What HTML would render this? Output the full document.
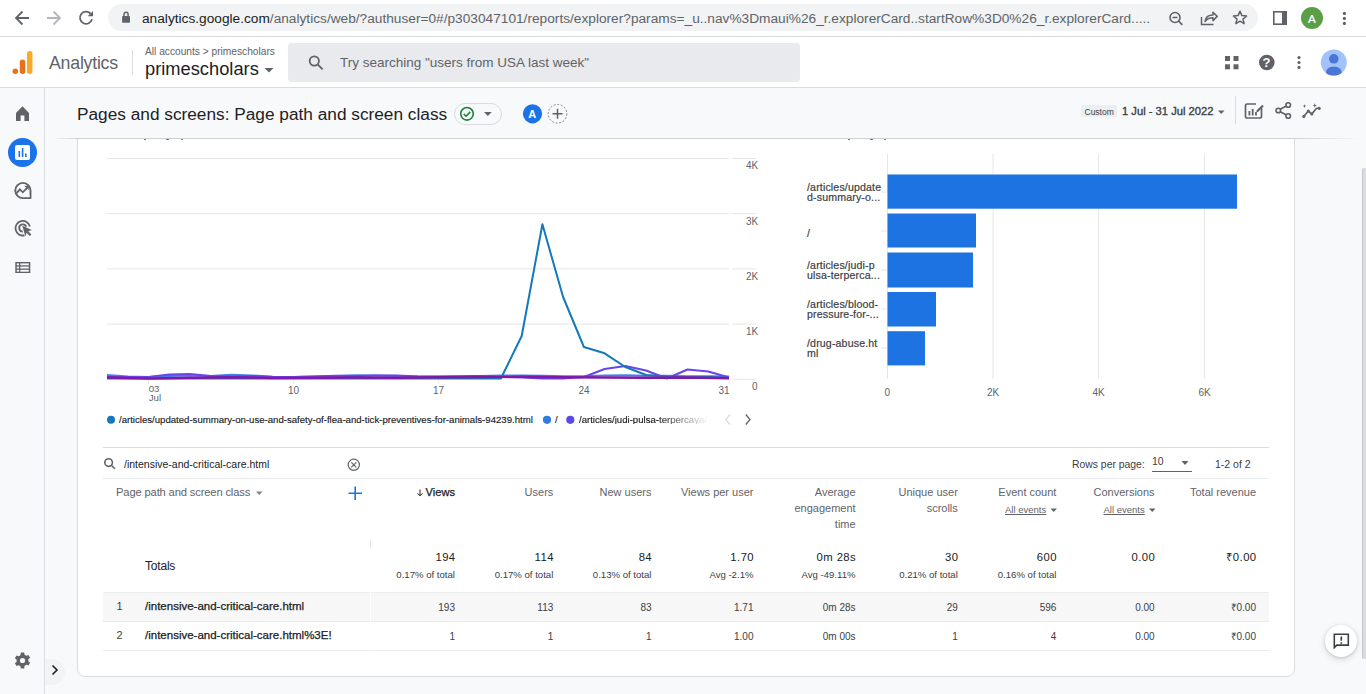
<!DOCTYPE html>
<html><head><meta charset="utf-8">
<style>
*{box-sizing:border-box;margin:0;padding:0}
html,body{width:1366px;height:694px;overflow:hidden;background:#f8f9fa;font-family:"Liberation Sans",sans-serif;color:#202124}
.a{position:absolute}
.t{position:absolute;white-space:nowrap;line-height:1}
.r{text-align:right}
svg{position:absolute;overflow:visible}
</style></head><body>

<!-- card -->
<div class="a" style="left:77px;top:100px;width:1218px;height:577px;background:#fff;border:1px solid #dadce0;border-radius:8px"></div>
<div class="a" style="left:45px;top:88px;width:1321px;height:50px;background:#f8f9fa"></div>

<!-- line chart -->
<svg style="left:0;top:140px" width="800" height="300" viewBox="0 140 800 300">
 <g stroke="#e6e6e6" stroke-width="1">
  <path d="M107 158.5H729M107 213.7H729M107 268.9H729M107 324.1H729"/>
  <path d="M732 158.5H756M732 213.7H756M732 268.9H756M732 324.1H756M732 379.3H756"/>
 </g>
 <g stroke="#e8eaed" stroke-width="1"><path d="M148.5 380v4M293.6 380v4M438.8 380v4M583.9 380v4M729 380v4"/></g>
 <g fill="none" stroke-width="2" stroke-linejoin="round">
  <path d="M107.0 375.0 L127.7 376.5 L148.5 377.0 L169.2 376.0 L189.9 375.5 L210.7 376.0 L231.4 374.8 L252.1 375.5 L272.9 376.8 L293.6 377.0 L314.3 376.5 L335.1 376.0 L355.8 375.3 L376.5 375.6 L397.3 376.0 L418.0 376.5 L438.7 376.2 L459.5 376.2 L480.2 376.0 L500.9 375.5 L521.7 375.6 L542.4 375.8 L563.1 376.2 L583.9 376.3 L604.6 375.5 L625.3 375.2 L646.1 375.8 L666.8 375.8 L687.5 376.2 L708.3 376.3 L729.0 376.5" stroke="#3f80f0"/>
  <path d="M107.0 377.0 L127.7 377.0 L148.5 377.0 L169.2 374.5 L189.9 374.0 L210.7 376.0 L231.4 376.5 L252.1 376.0 L272.9 377.0 L293.6 377.0 L314.3 376.5 L335.1 375.8 L355.8 376.0 L376.5 375.5 L397.3 375.5 L418.0 376.5 L438.7 377.0 L459.5 376.5 L480.2 376.0 L500.9 377.0 L521.7 377.5 L542.4 378.5 L563.1 378.5 L583.9 377.0 L604.6 369.0 L625.3 366.0 L646.1 370.5 L666.8 378.5 L687.5 369.5 L708.3 371.5 L729.0 377.5" stroke="#6a45ea"/>
  <path d="M107.0 378.5 L480.2 378.5 L500.9 378.5 L521.7 336.0 L542.4 224.3 L563.1 297.0 L583.9 347.0 L604.6 353.3 L625.3 367.0 L646.1 375.0 L666.8 376.5 L687.5 377.5 L708.3 377.0 L729.0 378.0" stroke="#1479b8"/>
  <path d="M107.0 377.5 L148.5 378.5 L189.9 377.8 L231.4 377.2 L272.9 378.0 L314.3 377.8 L355.8 377.5 L397.3 377.8 L438.7 377.3 L480.2 377.0 L521.7 376.8 L563.1 377.2 L604.6 377.5 L646.1 377.8 L687.5 377.5 L729.0 378.3" stroke="#8119a6" stroke-width="2.4"/>
 </g>
 <g fill="#e8eaed"><rect x="720" y="340" width="0" height="0"/></g>
 <circle cx="111" cy="419.8" r="4" fill="#1479b8"/>
 <circle cx="547" cy="419.8" r="4.1" fill="#2f7de1"/>
 <circle cx="570.3" cy="419.8" r="4.1" fill="#5a4ae3"/>
 <path d="M730 414.5l-4.2 5 4.2 5" fill="none" stroke="#dadce0" stroke-width="1.3"/>
 <path d="M745.8 414.5l4.2 5-4.2 5" fill="none" stroke="#5f6368" stroke-width="1.3"/>
</svg>
<div class="t" style="left:746px;top:161.3px;font-size:10px;color:#5f6368">4K</div>
<div class="t" style="left:746px;top:216.5px;font-size:10px;color:#5f6368">3K</div>
<div class="t" style="left:746px;top:271.7px;font-size:10px;color:#5f6368">2K</div>
<div class="t" style="left:746px;top:326.9px;font-size:10px;color:#5f6368">1K</div>
<div class="t" style="left:752px;top:382.3px;font-size:10px;color:#5f6368">0</div>
<div class="t" style="left:148.7px;top:385.3px;font-size:9.7px;color:#5f6368;line-height:8.9px">03<br>Jul</div>
<div class="t" style="left:288px;top:385.8px;font-size:10px;color:#5f6368">10</div>
<div class="t" style="left:433px;top:385.8px;font-size:10px;color:#5f6368">17</div>
<div class="t" style="left:578.5px;top:385.8px;font-size:10px;color:#5f6368">24</div>
<div class="t" style="left:718.5px;top:385.8px;font-size:10px;color:#5f6368">31</div>
<div class="t" style="left:119px;top:414.5px;font-size:9.6px;color:#202124;-webkit-text-stroke:0.15px #202124">/articles/updated-summary-on-use-and-safety-of-flea-and-tick-preventives-for-animals-94239.html</div>
<div class="t" style="left:555px;top:414.5px;font-size:9.6px;color:#202124;-webkit-text-stroke:0.15px #202124">/</div>
<div class="t" style="left:579px;top:414.5px;font-size:9.6px;width:130px;overflow:hidden;color:#202124;-webkit-text-stroke:0.15px #202124;-webkit-mask-image:linear-gradient(90deg,#000 60%,transparent 100%)">/articles/judi-pulsa-terpercaya/</div>

<!-- bar chart -->
<svg style="left:780px;top:140px" width="500" height="270" viewBox="780 140 500 270">
 <g stroke="#e6e6e6" stroke-width="1">
  <path d="M887.5 154V379M993 154V379M1098.6 154V379M1204.4 154V379"/>
  <path d="M881 192H887M881 231H887M881 270H887M881 309H887M881 348H887"/>
 </g>
 <g fill="#1e73e2">
  <rect x="887.5" y="174.5" width="349.5" height="34.2"/>
  <rect x="887.5" y="213.5" width="88.5" height="34"/>
  <rect x="887.5" y="252.5" width="85.5" height="35"/>
  <rect x="887.5" y="292" width="48.5" height="34.5"/>
  <rect x="887.5" y="331.2" width="37.5" height="34.2"/>
 </g>
</svg>
<div class="t" style="left:807px;top:182.1px;font-size:10.6px;line-height:10.2px;letter-spacing:0.15px;-webkit-text-stroke:0.2px #3c4043;color:#3c4043">/articles/update<br>d-summary-o...</div>
<div class="t" style="left:807px;top:227.8px;font-size:10.6px;line-height:10.2px;letter-spacing:0.15px;-webkit-text-stroke:0.2px #3c4043;color:#3c4043">/</div>
<div class="t" style="left:807px;top:260.1px;font-size:10.6px;line-height:10.2px;letter-spacing:0.15px;-webkit-text-stroke:0.2px #3c4043;color:#3c4043">/articles/judi-p<br>ulsa-terperca...</div>
<div class="t" style="left:807px;top:299.1px;font-size:10.6px;line-height:10.2px;letter-spacing:0.15px;-webkit-text-stroke:0.2px #3c4043;color:#3c4043">/articles/blood-<br>pressure-for-...</div>
<div class="t" style="left:807px;top:338.1px;font-size:10.6px;line-height:10.2px;letter-spacing:0.15px;-webkit-text-stroke:0.2px #3c4043;color:#3c4043">/drug-abuse.ht<br>ml</div>
<div class="t" style="left:884.5px;top:387.8px;font-size:10px;color:#5f6368">0</div>
<div class="t" style="left:987px;top:387.8px;font-size:10px;color:#5f6368">2K</div>
<div class="t" style="left:1092.5px;top:387.8px;font-size:10px;color:#5f6368">4K</div>
<div class="t" style="left:1198.5px;top:387.8px;font-size:10px;color:#5f6368">6K</div>

<!-- table -->
<div class="a" style="left:103px;top:447px;width:1166px;height:1px;background:#dadce0"></div>
<div class="a" style="left:103px;top:478px;width:1166px;height:1px;background:#e8eaed"></div>
<div class="a" style="left:103px;top:592px;width:1166px;height:30px;background:#f7f7f7;border-top:1px solid #ededed;border-bottom:1px solid #ececec"></div>
<div class="a" style="left:103px;top:650px;width:1166px;height:1px;background:#ececec"></div>
<div class="a" style="left:370px;top:592px;width:1px;height:60px;background:#fff"></div>
<div class="a" style="left:370px;top:540px;width:1px;height:8px;background:#e8eaed"></div>
<svg style="left:0;top:440px" width="1366" height="80" viewBox="0 440 1366 80">
 <g fill="none" stroke="#5f6368" stroke-width="1.6"><circle cx="108.6" cy="462.6" r="3.8"/><path d="M111.3 465.3l3.5 3.5"/></g>
 <g fill="none" stroke="#5f6368" stroke-width="1.2"><circle cx="353.8" cy="464.8" r="5.6"/><path d="M351.3 462.3l5 5M356.3 462.3l-5 5"/></g>
 <path d="M1181.5 461h7l-3.5 4z" fill="#5f6368"/>
 <path d="M256 491.5h6.5l-3.25 3.5z" fill="#80868b"/>
 <path d="M355.2 486.5v13.5M348.5 493.2h13.5" stroke="#1a73e8" stroke-width="1.6"/>
 <path d="M420 489.5v6M417.5 493.3l2.5 2.6 2.5-2.6" fill="none" stroke="#202124" stroke-width="1"/>
 <path d="M1050.5 508.5h6.5l-3.25 3.5zM1149 508.5h6.5l-3.25 3.5z" fill="#5f6368"/>
</svg>
<div class="t" style="left:124px;top:458.5px;font-size:10.5px;color:#202124">/intensive-and-critical-care.html</div>
<div class="t" style="left:1072px;top:459.5px;font-size:10.4px;color:#3c4043">Rows per page:</div>
<div class="t" style="left:1152px;top:457px;font-size:10.4px;color:#3c4043">10</div>
<div class="a" style="left:1152px;top:471px;width:40px;height:1px;background:#5f6368"></div>
<div class="t" style="left:1215px;top:458.6px;font-size:10.5px;color:#3c4043">1-2 of 2</div>
<div class="t" style="left:116px;top:487.2px;font-size:11.2px;letter-spacing:-0.15px;color:#5f6368">Page path and screen class</div>
<div class="t r" style="right:911px;top:487px;font-size:11.1px;color:#202124;-webkit-text-stroke:0.25px #202124">Views</div>
<div class="t r" style="right:812.7px;top:487.2px;font-size:11px;color:#5f6368;">Users</div>
<div class="t r" style="right:714.5px;top:487.2px;font-size:11px;color:#5f6368;">New users</div>
<div class="t r" style="right:612.5px;top:487.2px;font-size:11px;color:#5f6368;">Views per user</div>
<div class="t r" style="right:510.4px;top:488px;font-size:11px;color:#5f6368;line-height:16.3px;top:483.6px">Average<br>engagement<br>time</div>
<div class="t r" style="right:408.20000000000005px;top:488px;font-size:11px;color:#5f6368;line-height:16.3px;top:483.6px">Unique user<br>scrolls</div>
<div class="t r" style="right:309.5999999999999px;top:487.2px;font-size:11px;color:#5f6368;">Event count</div>
<div class="t r" style="right:211.4000000000001px;top:487.2px;font-size:11px;color:#5f6368;">Conversions</div>
<div class="t r" style="right:110px;top:487.2px;font-size:11px;color:#5f6368;">Total revenue</div>
<div class="t" style="left:1005px;top:504.8px;font-size:9.5px;color:#5f6368;text-decoration:underline">All events</div>
<div class="t" style="left:1103.5px;top:504.8px;font-size:9.5px;color:#5f6368;text-decoration:underline">All events</div>
<div class="t" style="left:145px;top:560px;font-size:12px;letter-spacing:-0.2px;color:#202124">Totals</div>
<div class="t r" style="right:910.4px;top:552.3px;font-size:11.3px;letter-spacing:0.45px;color:#202124;">194</div>
<div class="t r" style="right:911px;top:570px;font-size:9.6px;color:#3c4043;">0.17% of total</div>
<div class="t r" style="right:812.1px;top:552.3px;font-size:11.3px;letter-spacing:0.45px;color:#202124;">114</div>
<div class="t r" style="right:812.7px;top:570px;font-size:9.6px;color:#3c4043;">0.17% of total</div>
<div class="t r" style="right:713.9px;top:552.3px;font-size:11.3px;letter-spacing:0.45px;color:#202124;">84</div>
<div class="t r" style="right:714.5px;top:570px;font-size:9.6px;color:#3c4043;">0.13% of total</div>
<div class="t r" style="right:611.9px;top:552.3px;font-size:11.3px;letter-spacing:0.45px;color:#202124;">1.70</div>
<div class="t r" style="right:612.5px;top:570px;font-size:9.6px;color:#3c4043;">Avg -2.1%</div>
<div class="t r" style="right:509.8px;top:552.3px;font-size:11.3px;letter-spacing:0.45px;color:#202124;">0m 28s</div>
<div class="t r" style="right:510.4px;top:570px;font-size:9.6px;color:#3c4043;">Avg -49.11%</div>
<div class="t r" style="right:407.6px;top:552.3px;font-size:11.3px;letter-spacing:0.45px;color:#202124;">30</div>
<div class="t r" style="right:408.20000000000005px;top:570px;font-size:9.6px;color:#3c4043;">0.21% of total</div>
<div class="t r" style="right:309.0px;top:552.3px;font-size:11.3px;letter-spacing:0.45px;color:#202124;">600</div>
<div class="t r" style="right:309.5999999999999px;top:570px;font-size:9.6px;color:#3c4043;">0.16% of total</div>
<div class="t r" style="right:210.8px;top:552.3px;font-size:11.3px;letter-spacing:0.45px;color:#202124;">0.00</div>
<div class="t r" style="right:109.4px;top:552.3px;font-size:11.3px;letter-spacing:0.45px;color:#202124;">&#8377;0.00</div>
<div class="t" style="left:116.5px;top:601px;font-size:11px;color:#3c4043">1</div>
<div class="t" style="left:145px;top:600.7px;font-size:11.5px;color:#202124;-webkit-text-stroke:0.25px #202124">/intensive-and-critical-care.html</div>
<div class="t" style="left:116.5px;top:630px;font-size:11px;color:#3c4043">2</div>
<div class="t" style="left:145px;top:629.7px;font-size:11.5px;color:#202124;-webkit-text-stroke:0.25px #202124">/intensive-and-critical-care.html%3E!</div>
<div class="t r" style="right:911px;top:602.5px;font-size:10px;color:#3c4043;">193</div>
<div class="t r" style="right:911px;top:631.5px;font-size:10px;color:#3c4043;">1</div>
<div class="t r" style="right:812.7px;top:602.5px;font-size:10px;color:#3c4043;">113</div>
<div class="t r" style="right:812.7px;top:631.5px;font-size:10px;color:#3c4043;">1</div>
<div class="t r" style="right:714.5px;top:602.5px;font-size:10px;color:#3c4043;">83</div>
<div class="t r" style="right:714.5px;top:631.5px;font-size:10px;color:#3c4043;">1</div>
<div class="t r" style="right:612.5px;top:602.5px;font-size:10px;color:#3c4043;">1.71</div>
<div class="t r" style="right:612.5px;top:631.5px;font-size:10px;color:#3c4043;">1.00</div>
<div class="t r" style="right:510.4px;top:602.5px;font-size:10px;color:#3c4043;">0m 28s</div>
<div class="t r" style="right:510.4px;top:631.5px;font-size:10px;color:#3c4043;">0m 00s</div>
<div class="t r" style="right:408.20000000000005px;top:602.5px;font-size:10px;color:#3c4043;">29</div>
<div class="t r" style="right:408.20000000000005px;top:631.5px;font-size:10px;color:#3c4043;">1</div>
<div class="t r" style="right:309.5999999999999px;top:602.5px;font-size:10px;color:#3c4043;">596</div>
<div class="t r" style="right:309.5999999999999px;top:631.5px;font-size:10px;color:#3c4043;">4</div>
<div class="t r" style="right:211.4000000000001px;top:602.5px;font-size:10px;color:#3c4043;">0.00</div>
<div class="t r" style="right:211.4000000000001px;top:631.5px;font-size:10px;color:#3c4043;">0.00</div>
<div class="t r" style="right:110px;top:602.5px;font-size:10px;color:#3c4043;">&#8377;0.00</div>
<div class="t r" style="right:110px;top:631.5px;font-size:10px;color:#3c4043;">&#8377;0.00</div>

<div class="a" style="left:45px;top:658.5px;width:19.5px;height:26.5px;background:#f1f3f4;border-radius:0 13px 13px 0"></div>
<svg style="left:0;top:640px" width="80" height="54" viewBox="0 640 80 54"><path d="M52.5 665.5l4.5 4.5-4.5 4.5" fill="none" stroke="#202124" stroke-width="1.6"/></svg>
<div class="a" style="left:1325px;top:624.7px;width:32px;height:32px;border-radius:50%;background:#fff;box-shadow:0 1px 3px rgba(60,64,67,.2),0 2px 6px 1px rgba(60,64,67,.12)"></div>
<svg style="left:1320px;top:620px" width="40" height="40" viewBox="1320 620 40 40"><path d="M1334.3 634.3h14v10.8H1336.8l-2.5 2.5z" fill="none" stroke="#3c4043" stroke-width="1.6" stroke-linejoin="miter"/><path d="M1341.3 636.5v4.3M1341.3 642.2v1.6" stroke="#3c4043" stroke-width="1.7"/></svg>
<div class="a" style="left:1362px;top:168px;width:5px;height:491px;background:#dadce0;border-radius:2px;border-left:1px solid #c4c7cb"></div>
<div class="a" style="left:144px;top:138px;width:1.5px;height:1.6px;background:#5a5f66;border-radius:0 0 1px 1px"></div>
<div class="a" style="left:165.5px;top:138px;width:3px;height:1.6px;background:#5a5f66;border-radius:0 0 1px 1px"></div>
<div class="a" style="left:181px;top:138px;width:1.5px;height:1.6px;background:#5a5f66;border-radius:0 0 1px 1px"></div>
<div class="a" style="left:848px;top:138px;width:1.5px;height:1.6px;background:#5a5f66;border-radius:0 0 1px 1px"></div>
<div class="a" style="left:869.5px;top:138px;width:3px;height:1.6px;background:#5a5f66;border-radius:0 0 1px 1px"></div>
<div class="a" style="left:884px;top:138px;width:1.5px;height:1.6px;background:#5a5f66;border-radius:0 0 1px 1px"></div>
<!-- Chrome toolbar -->
<div class="a" style="left:0;top:0;width:1366px;height:36px;background:#fff"></div>
<div class="a" style="left:0;top:36px;width:1366px;height:1px;background:#dadce0"></div>
<div class="a" style="left:108px;top:4px;width:1150px;height:27px;background:#f1f3f4;border-radius:14px"></div>
<div class="t" style="left:142px;top:11.8px;font-size:13.7px;color:#5f6368"><span style="color:#202124">analytics.google.com</span>/analytics/web/?authuser=0#/p303047101/reports/explorer?params=_u..nav%3Dmaui%26_r.explorerCard..startRow%3D0%26_r.explorerCard.....</div>


<!-- chrome nav icons -->
<svg style="left:0;top:0" width="1366" height="36" viewBox="0 0 1366 36">
 <g fill="none" stroke="#5f6368" stroke-width="1.8">
  <path d="M29 18H16.5M22.5 11.5L16 18l6.5 6.5"/>
 </g>
 <g fill="none" stroke="#b4b7bb" stroke-width="1.8">
  <path d="M47 18h12.5M53.5 11.5L60 18l-6.5 6.5"/>
 </g>
 <g fill="none" stroke="#5f6368" stroke-width="1.8">
  <path d="M90.6 13.6A6.1 6.1 0 1 0 92 19.3"/>
 </g>
 <path d="M93 10.9v5.3h-5.3z" fill="#5f6368"/>
 <!-- lock -->
 <rect x="122.1" y="16" width="7.9" height="6.8" rx="0.9" fill="#5f6368"/>
 <path d="M124 16.5v-2.2a2.05 2.05 0 0 1 4.1 0v2.2" fill="none" stroke="#5f6368" stroke-width="1.5"/>
 <!-- zoom out -->
 <g fill="none" stroke="#5f6368" stroke-width="1.6">
  <circle cx="1175" cy="17.5" r="5"/><path d="M1178.6 21.1l3.8 3.8M1172.5 17.5h5"/>
 </g>
 <!-- share -->
 <g fill="none" stroke="#5f6368" stroke-width="1.5">
  <path d="M1201.5 17v7.5h12"/>
  <path d="M1205 21.5c0.5-4 3.5-6.5 8-6.5v-2.8l4.2 4.2-4.2 4.2v-2.9c-3.5 0-6 1-8 3.8z" stroke-linejoin="round"/>
 </g>
 <!-- star -->
 <path d="M1240 11.3l1.9 4.3 4.7.4-3.6 3.1 1.1 4.6-4.1-2.5-4.1 2.5 1.1-4.6-3.6-3.1 4.7-.4z" fill="none" stroke="#5f6368" stroke-width="1.5" stroke-linejoin="round"/>
 <!-- side panel -->
 <rect x="1273.8" y="11.8" width="12.4" height="12.4" fill="none" stroke="#5f6368" stroke-width="1.6"/>
 <rect x="1282" y="11.5" width="4.5" height="13" fill="#5f6368"/>
 <!-- avatar -->
 <circle cx="1312" cy="18" r="11" fill="#5a9f45"/>
 <!-- menu dots -->
 <circle cx="1344.4" cy="13.4" r="1.6" fill="#5f6368"/><circle cx="1344.4" cy="18.4" r="1.6" fill="#5f6368"/><circle cx="1344.4" cy="23.4" r="1.6" fill="#5f6368"/>
</svg>
<div class="t" style="left:1308px;top:12.6px;font-size:11.6px;color:#fff;-webkit-text-stroke:0.2px #fff">A</div>

<!-- GA header -->
<div class="a" style="left:0;top:37px;width:1366px;height:50px;background:#fff"></div>
<div class="a" style="left:0;top:87px;width:1366px;height:1px;background:#dadce0"></div>
<div class="t" style="left:49px;top:54.5px;font-size:17.8px;letter-spacing:-0.25px;color:#5f6368">Analytics</div>
<div class="a" style="left:132px;top:50px;width:1px;height:25px;background:#dadce0"></div>
<div class="t" style="left:145px;top:46.5px;font-size:10.2px;color:#5f6368">All accounts &gt; primescholars</div>
<div class="t" style="left:145px;top:60px;font-size:18.3px;color:#202124">primescholars</div>
<div class="a" style="left:288px;top:43px;width:512px;height:39px;background:#e9eaee;border-radius:4px"></div>
<div class="t" style="left:340px;top:56px;font-size:13.5px;color:#5f6368">Try searching "users from USA last week"</div>


<svg style="left:0;top:37px" width="1366" height="50" viewBox="0 37 1366 50">
 <!-- GA logo -->
 <rect x="27" y="51" width="5.5" height="23" rx="2.75" fill="#f9a928"/>
 <rect x="19.8" y="59.5" width="5.5" height="14.5" rx="2.75" fill="#e8721a"/>
 <circle cx="15.3" cy="71.3" r="2.75" fill="#e8721a"/>
 <!-- dropdown -->
 <path d="M264.5 68h9l-4.5 4.5z" fill="#5f6368"/>
 <!-- search icon -->
 <g fill="none" stroke="#5f6368" stroke-width="1.8"><circle cx="314.3" cy="61" r="4.6"/><path d="M317.6 64.3l5 5"/></g>
 <!-- apps grid -->
 <g fill="#5f6368"><rect x="1225" y="56" width="5" height="5"/><rect x="1233.5" y="56" width="5" height="5"/><rect x="1225" y="64.3" width="5" height="5"/><rect x="1233.5" y="64.3" width="5" height="5"/></g>
 <!-- help -->
 <circle cx="1266.8" cy="62.5" r="7.8" fill="#5f6368"/>
 <!-- dots -->
 <circle cx="1299" cy="57.6" r="1.55" fill="#5f6368"/><circle cx="1299" cy="62.5" r="1.55" fill="#5f6368"/><circle cx="1299" cy="67.4" r="1.55" fill="#5f6368"/>
 <!-- avatar -->
 <circle cx="1333.8" cy="62.5" r="13" fill="#a1c2fa"/>
 <circle cx="1333.8" cy="58.8" r="4.8" fill="#4a76d6"/>
 <path d="M1326 72.5c0-4 3.5-5.8 7.8-5.8s7.8 1.8 7.8 5.8v0.5c-2.2 1.8-4.8 2.6-7.8 2.6s-5.6-.8-7.8-2.6z" fill="#4a76d6"/>
</svg>
<div class="t" style="left:1262.6px;top:56px;font-size:13px;font-weight:bold;color:#fff">?</div>

<!-- left nav -->
<div class="a" style="left:44px;top:88px;width:1px;height:606px;background:#dadce0"></div>

<svg style="left:0;top:88px" width="44" height="606" viewBox="0 88 44 606">
 <!-- home -->
 <path d="M22.5 106.3L16 113v8h4.6v-5.5h3.8v5.5H29v-8z" fill="#5f6368"/>
 <!-- analytics selected -->
 <circle cx="22.5" cy="152.5" r="14.5" fill="#1a73e8"/>
 <rect x="15" y="145" width="15" height="15" rx="2" fill="#fff"/>
 <g fill="#1a73e8"><rect x="18.5" y="151" width="1.6" height="6"/><rect x="21.8" y="148" width="1.6" height="9"/><rect x="25" y="153.5" width="1.6" height="3.5"/></g>
 <!-- explore -->
 <path d="M30.5 190.5A7.6 7.6 0 1 0 22.9 198.1H30.5Z" fill="none" stroke="#5f6368" stroke-width="1.9" stroke-linejoin="round"/>
 <path d="M16.6 193.2l3.3-3.8 2.9 2.9 4.3-4.4" fill="none" stroke="#5f6368" stroke-width="1.8"/>
 <path d="M24.3 185.8h4.4v4.4z" fill="#5f6368"/>
 <circle cx="29" cy="196" r="0.8" fill="#f8f9fa"/>
 <!-- advertising -->
 <g fill="none" stroke="#5f6368" stroke-width="1.8">
  <path d="M29.9 226.5A7.3 7.3 0 1 0 24.5 235.3"/>
  <path d="M26.2 226.8A3.6 3.6 0 1 0 22.8 231.6"/>
 </g>
 <path d="M22.3 225.8l9.5 4.2-3.6 1.2 3.2 3.3-1.5 1.5-3.3-3.2-1.2 3.6z" fill="#5f6368"/>
 <!-- list -->
 <g fill="#5f6368">
  <rect x="15.3" y="262" width="15" height="11"/>
 </g>
 <g fill="#f8f9fa">
  <rect x="16.8" y="263.4" width="2.2" height="1.9"/><rect x="20.3" y="263.4" width="8.5" height="1.9"/>
  <rect x="16.8" y="266.6" width="2.2" height="1.9"/><rect x="20.3" y="266.6" width="8.5" height="1.9"/>
  <rect x="16.8" y="269.8" width="2.2" height="1.9"/><rect x="20.3" y="269.8" width="8.5" height="1.9"/>
 </g>
 <!-- gear -->
 <g transform="translate(22.5 660.5)">
  <path fill="#5f6368" d="M-1.6-8h3.2l.5 2.3a6 6 0 0 1 1.7 1l2.2-.8 1.6 2.8-1.8 1.5a6 6 0 0 1 0 2l1.8 1.5-1.6 2.8-2.2-.8a6 6 0 0 1-1.7 1L1.6 8h-3.2l-.5-2.3a6 6 0 0 1-1.7-1l-2.2.8-1.6-2.8 1.8-1.5a6 6 0 0 1 0-2l-1.8-1.5 1.6-2.8 2.2.8a6 6 0 0 1 1.7-1z"/>
  <circle r="2.6" fill="#f8f9fa"/>
 </g>
</svg>


<!-- title bar -->
<div class="t" style="left:77px;top:105.7px;font-size:17.25px;color:#202124">Pages and screens: Page path and screen class</div>

<div class="a" style="left:454px;top:103px;width:48px;height:22px;border:1px solid #dadce0;border-radius:11px"></div>
<svg style="left:0;top:88px" width="1366" height="50" viewBox="0 88 1366 50">
 <circle cx="467" cy="113.8" r="6.3" fill="none" stroke="#188038" stroke-width="1.6"/>
 <path d="M463.8 114l2.2 2.2 4.3-4.3" fill="none" stroke="#188038" stroke-width="1.6"/>
 <path d="M484 112h7.7l-3.85 4z" fill="#5f6368"/>
 <circle cx="532.5" cy="113.8" r="9.6" fill="#1a73e8"/>
 <circle cx="557.5" cy="113.8" r="9.3" fill="none" stroke="#80868b" stroke-width="1" stroke-dasharray="2 1.6"/>
 <path d="M557.5 108.8v10M552.5 113.8h10" stroke="#5f6368" stroke-width="1.5"/>
</svg>

<div class="a" style="left:1081px;top:105px;width:36px;height:12px;background:#eceef0;border-radius:2px"></div>
<div class="t" style="left:1084.5px;top:107.5px;font-size:8.5px;color:#3c4043">Custom</div>
<div class="t" style="left:1122px;top:105.5px;font-size:11.2px;-webkit-text-stroke:0.35px #3c4043;color:#3c4043">1 Jul - 31 Jul 2022</div>
<div class="a" style="left:1235px;top:96px;width:1px;height:28px;background:#dadce0"></div>
<svg style="left:0;top:88px" width="1366" height="50" viewBox="0 88 1366 50">
 <path d="M1218 110.5h6.5l-3.25 3.5z" fill="#5f6368"/>
 <!-- edit report -->
 <path d="M1256 104H1247a1.5 1.5 0 0 0-1.5 1.5v11a1.5 1.5 0 0 0 1.5 1.5h13a1.5 1.5 0 0 0 1.5-1.5V108" fill="none" stroke="#5f6368" stroke-width="1.7"/>
 <g fill="#5f6368"><rect x="1248.5" y="111" width="1.8" height="4.5"/><rect x="1251.8" y="109" width="1.8" height="6.5"/><rect x="1255.1" y="112" width="1.8" height="3.5"/></g>
 <path d="M1256.5 110.5l5.8-5.8 1.5 1.5-5.8 5.8h-1.5z" fill="#5f6368"/>
 <!-- share -->
 <g fill="none" stroke="#5f6368" stroke-width="1.6">
  <circle cx="1288.2" cy="105" r="2.3"/><circle cx="1278.3" cy="110.5" r="2.3"/><circle cx="1288.2" cy="116" r="2.3"/>
  <path d="M1280.3 109.3l6-3.3M1280.3 111.7l6 3.3"/>
 </g>
 <!-- insights -->
 <g fill="none" stroke="#5f6368" stroke-width="1.7"><path d="M1303.8 116.5l4.5-5.5 3.5 3 4.5-5.5 3.3-0.5"/></g>
 <g fill="#5f6368"><circle cx="1303.8" cy="116.5" r="1.6"/><circle cx="1308.3" cy="111" r="1.5"/><circle cx="1311.8" cy="114" r="1.5"/><circle cx="1319.2" cy="108.3" r="1.6"/>
 <path d="M1304.5 104.2l.5 1.4 1.4.5-1.4.5-.5 1.4-.5-1.4-1.4-.5 1.4-.5z"/><path d="M1314.8 103.2l.6 1.7 1.7.6-1.7.6-.6 1.7-.6-1.7-1.7-.6 1.7-.6z"/></g>
</svg>
<div class="t" style="left:528.2px;top:108.5px;font-size:11px;font-weight:bold;color:#fff">A</div>
<div class="a" style="left:45px;top:138px;width:1321px;height:1px;background:linear-gradient(90deg,rgba(206,208,211,0) 7px,#ced0d3 32px,#ced0d3 1249px,rgba(206,208,211,0) 1315px)"></div>


</body></html>
